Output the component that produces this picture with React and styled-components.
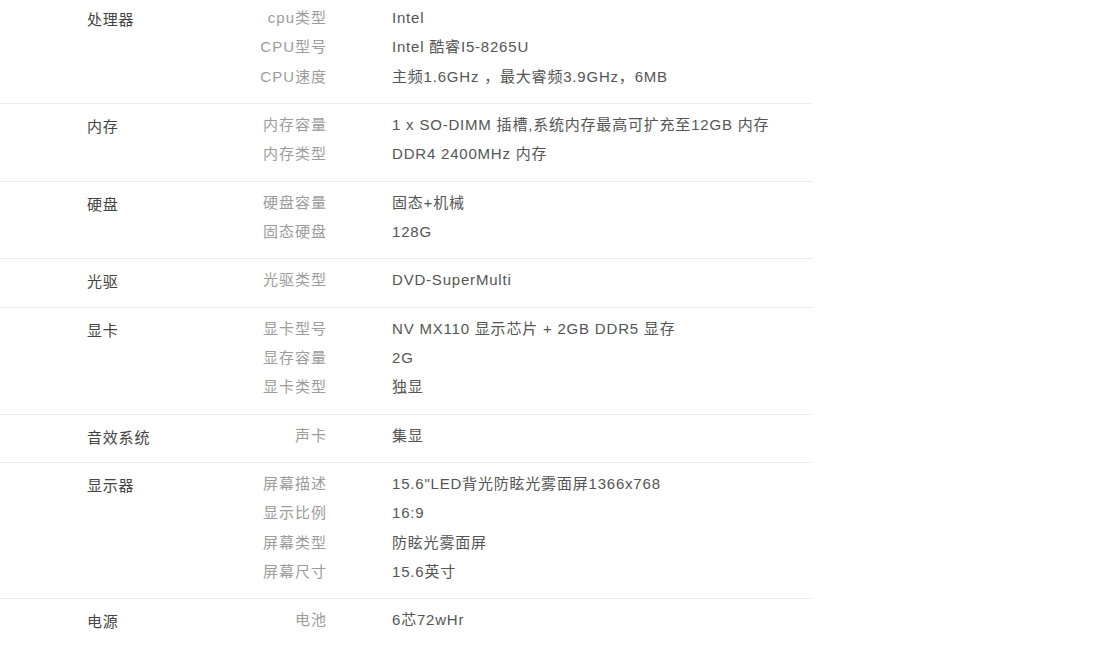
import React from "react";
import styled, { createGlobalStyle } from "styled-components";

const GlobalStyle = createGlobalStyle`
  html, body { margin: 0; padding: 0; background: #fff; }
  body {
    font-family: "Liberation Sans", Arial, "Noto Sans CJK SC", sans-serif;
    font-size: 15px;
    overflow: hidden;
  }
`;

const specs = [
  { cat: "处理器", rows: [["cpu类型", "Intel"], ["CPU型号", "Intel 酷睿I5-8265U"], ["CPU速度", "主频1.6GHz ，最大睿频3.9GHz，6MB"]] },
  { cat: "内存", rows: [["内存容量", "1 x SO-DIMM 插槽,系统内存最高可扩充至12GB 内存"], ["内存类型", "DDR4 2400MHz 内存"]] },
  { cat: "硬盘", rows: [["硬盘容量", "固态+机械"], ["固态硬盘", "128G"]] },
  { cat: "光驱", rows: [["光驱类型", "DVD-SuperMulti"]] },
  { cat: "显卡", rows: [["显卡型号", "NV MX110 显示芯片 + 2GB DDR5 显存"], ["显存容量", "2G"], ["显卡类型", "独显"]] },
  { cat: "音效系统", rows: [["声卡", "集显"]] },
  { cat: "显示器", rows: [["屏幕描述", "15.6\"LED背光防眩光雾面屏1366x768"], ["显示比例", "16:9"], ["屏幕类型", "防眩光雾面屏"], ["屏幕尺寸", "15.6英寸"]] },
  { cat: "电源", rows: [["电池", "6芯72wHr"]] },
];

const Table = styled.div`
  width: 812px;
  margin-top: -3px;
`;

const Group = styled.section`
  display: grid;
  grid-template-columns: 207px 1fr;
  align-items: start;
  padding: 6px 0 12px;
  border-bottom: 1px solid #ebebeb;
  &:last-child { border-bottom: none; }
`;

const Category = styled.div`
  padding-left: 87px;
  padding-top: 4px;
  line-height: 25.33px;
  color: #444;
  letter-spacing: 0.8px;
`;

const Rows = styled.dl`
  margin: 0;
  display: flex;
  flex-direction: column;
`;

const Row = styled.div`
  display: grid;
  grid-template-columns: 120px 1fr;
  column-gap: 65px;
  height: 29.33px;
  line-height: 29.33px;
  letter-spacing: 0.8px;
`;

const Label = styled.dt`
  text-align: right;
  color: #9c9c9c;
  letter-spacing: 1px;
`;

const Value = styled.dd`
  margin: 0;
  color: #555;
  white-space: nowrap;
`;

export default function App() {
  return (
    <>
      <GlobalStyle />
      <Table>
        {specs.map((g) => (
          <Group key={g.cat}>
            <Category>{g.cat}</Category>
            <Rows>
              {g.rows.map(([l, v]) => (
                <Row key={l}>
                  <Label>{l}</Label>
                  <Value>{v}</Value>
                </Row>
              ))}
            </Rows>
          </Group>
        ))}
      </Table>
    </>
  );
}
